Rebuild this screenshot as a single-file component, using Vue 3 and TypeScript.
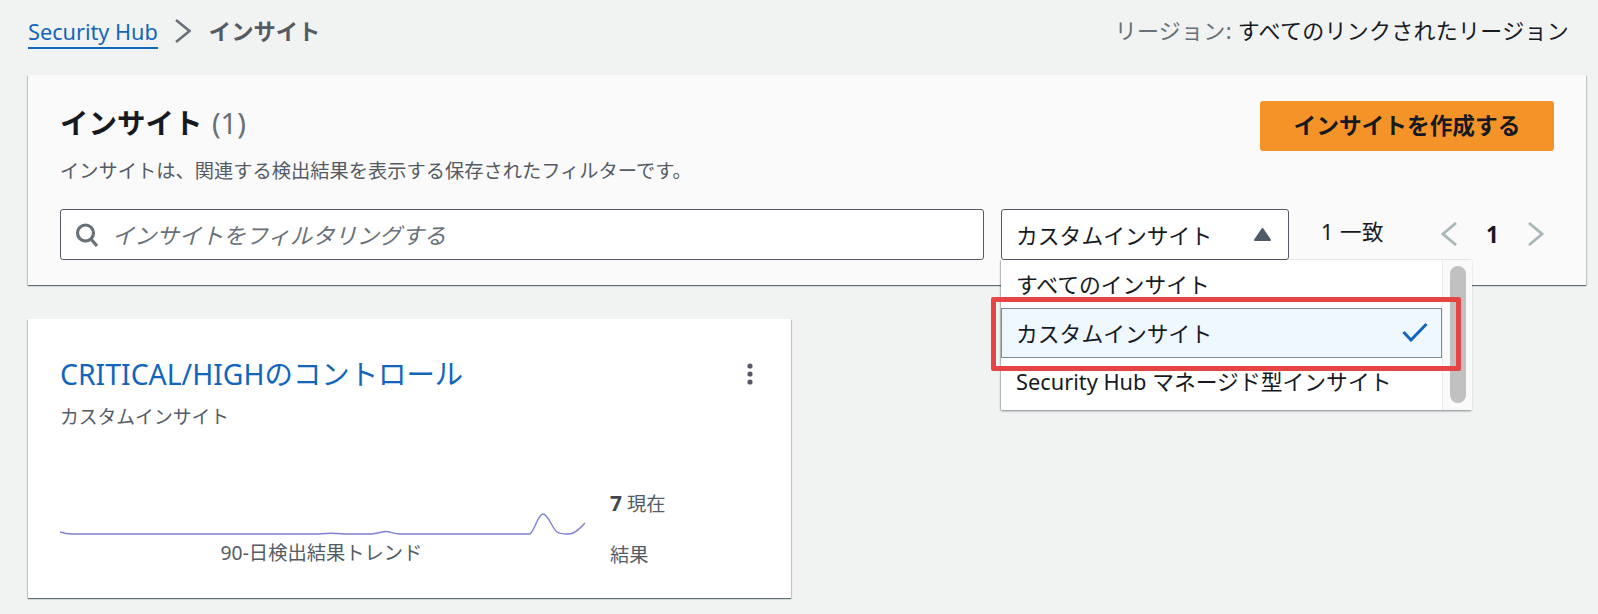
<script setup lang="ts">
const options: string[] = ['すべてのインサイト', 'カスタムインサイト', 'Security Hub マネージド型インサイト']
const selected = 'カスタムインサイト'
</script>

<template>
  <div class="page">
    <header class="topbar">
      <nav class="crumbs">
        <a class="crumb-link">Security Hub</a>
        <svg class="crumb-sep" width="16" height="24" viewBox="0 0 16 24"><path d="M1 1 L14.500 12 L1 23" /></svg>
        <span class="crumb-current">インサイト</span>
      </nav>
      <div class="region"><span class="region-label">リージョン:</span> すべてのリンクされたリージョン</div>
    </header>

    <section class="panel">
      <div class="panel-head">
        <div>
          <h1 class="title">インサイト <span class="count">(1)</span></h1>
          <p class="desc">インサイトは、関連する検出結果を表示する保存されたフィルターです。</p>
        </div>
        <button class="primary">インサイトを作成する</button>
      </div>
      <div class="filters">
        <div class="search">
          <svg width="24" height="24" viewBox="0 0 24 24" class="search-icon"><circle cx="10.5" cy="10" r="8" /><path d="M16 16 L22 23" /></svg>
          <span class="placeholder">インサイトをフィルタリングする</span>
        </div>
        <div class="select-wrap">
          <div class="select">
            <span>{{ selected }}</span>
            <svg width="17" height="13" viewBox="0 0 17 13"><path d="M8.500 1 L16 12 L1 12 Z" fill="#4f5b66" stroke="#4f5b66" stroke-width="2" stroke-linejoin="round" /></svg>
          </div>
          <div class="menu">
            <ul class="menu-list">
              <li v-for="o in options" :key="o" class="option" :class="{ active: o === selected }">
                <span>{{ o }}</span>
                <svg v-if="o === selected" width="26" height="20" viewBox="0 0 26 20"><path d="M1.5 10 L9 18 L24.5 2" /></svg>
              </li>
            </ul>
            <div class="track"><div class="thumb"></div></div>
            <div class="callout"></div>
          </div>
        </div>
        <div class="matches">1 一致</div>
        <div class="pager">
          <svg width="16" height="24" viewBox="0 0 16 24"><path d="M15 1 L2 12 L15 23" /></svg>
          <span class="page-no">1</span>
          <svg width="16" height="24" viewBox="0 0 16 24"><path d="M1 1 L14 12 L1 23" /></svg>
        </div>
      </div>
    </section>

    <article class="card">
      <div class="card-head">
        <a class="card-title">CRITICAL/HIGHのコントロール</a>
        <svg class="kebab" width="6" height="22" viewBox="0 0 6 22"><circle cx="3" cy="3" r="2.6" /><circle cx="3" cy="11" r="2.6" /><circle cx="3" cy="19" r="2.6" /></svg>
      </div>
      <div class="card-sub">カスタムインサイト</div>
      <div class="card-stats">
        <div class="trend">
          <svg width="526" height="28" viewBox="0 0 526 28">
            <path d="M0 19 C3 20 6 21 12 21 L258 21 C264 21 267 20.200 271 20.200 C275 20.200 279 21 285 21 L312 21 C317 20.500 322 18.500 326 18.500 C330 18.500 334 21 340 21 L470 21 C475 17 478 1 483 1 C488 1 492 15 497 19 C501 21.500 505 21 509 21 C515 21 520 15 525 10" />
          </svg>
          <div class="trend-label">90-日検出結果トレンド</div>
        </div>
        <div class="totals">
          <div><b>7</b> 現在</div>
          <div>結果</div>
        </div>
      </div>
    </article>
  </div>
</template>

<style>
html, body { margin: 0; background: #f1f3f3; }
</style>

<style scoped>
.page {
  width: 1598px;
  height: 614px;
  box-sizing: border-box;
  padding: 0 12px 0 28px;
  overflow: hidden;
  background: #f1f3f3;
  font-family: "Noto Sans", "Noto Sans CJK JP", sans-serif;
  color: #16191f;
}
.topbar {
  height: 75px;
  display: flex;
  justify-content: space-between;
  padding: 17px 0 0;
  box-sizing: border-box;
  font-size: 22px;
  line-height: 30px;
}
.crumbs { display: flex; align-items: flex-start; }
.crumb-link {
  color: #1166bb;
  border-bottom: 2px solid #1166bb;
  height: 30px;
  font-size: 21.700px;
}
.crumb-sep { margin: 2px 18px 0 17px; }
.crumb-sep path { fill: none; stroke: #687078; stroke-width: 2.600; }
.crumb-current { color: #545b64; font-weight: 700; font-size: 22.300px; }
.region { padding-right: 17px; margin-top: -2px; letter-spacing: 0.27px; }
.region-label { color: #687078; }

.panel {
  height: 210px;
  box-sizing: border-box;
  padding: 26px 32px 0 32px;
  background: #fafafa;
  box-shadow: 0 1px 1px rgba(0, 28, 36, 0.45), 1px 1px 1px rgba(0, 28, 36, 0.15), -1px 1px 1px rgba(0, 28, 36, 0.15);
}
.panel-head { display: flex; justify-content: space-between; align-items: flex-start; height: 108px; }
.title { margin: 0; font-size: 28.500px; line-height: 44px; font-weight: 700; }
.count { color: #687078; font-weight: 400; font-size: 29px; margin-left: 2px; }
.desc { margin: 13px 0 0; font-size: 19.250px; line-height: 26px; color: #545b64; }
.primary {
  width: 294px;
  height: 50px;
  border: 0;
  border-radius: 3px;
  background: #f49428;
  color: #16191f;
  font: 700 22.700px/30px "Noto Sans", "Noto Sans CJK JP", sans-serif;
  padding: 0;
}
.filters { display: flex; align-items: flex-start; }
.search {
  width: 924px;
  height: 51px;
  box-sizing: border-box;
  display: flex;
  align-items: center;
  border: 1px solid #545b64;
  border-radius: 3px;
  background: #fff;
  margin-right: 17px;
  padding-left: 14px;
}
.search-icon { flex: none; }
.search-icon circle, .search-icon path { fill: none; stroke: #687078; stroke-width: 3.200; }
.placeholder { margin-left: 13px; font-size: 22.300px; font-style: italic; color: #687078; }
.select-wrap { position: relative; width: 288px; height: 51px; }
.select {
  height: 51px;
  box-sizing: border-box;
  display: flex;
  align-items: center;
  justify-content: space-between;
  padding: 0 17px 0 14px;
  border: 1px solid #545b64;
  border-radius: 3px;
  background: #fff;
  font-size: 21.800px;
}
.menu {
  position: absolute;
  z-index: 3;
  left: 0;
  top: 51px;
  width: 470px;
  height: 150px;
  display: flex;
  background: #fff;
  box-shadow: 0 1px 2px rgba(0, 28, 36, 0.45), 1px 0 1px rgba(0, 28, 36, 0.15), -1px 0 1px rgba(0, 28, 36, 0.15);
  font-size: 21.800px;
}
.menu-list { list-style: none; margin: 0; padding: 0; width: 441px; flex: none; }
.option {
  height: 45px;
  box-sizing: border-box;
  display: flex;
  align-items: center;
  justify-content: space-between;
  padding: 0 14px 0 15px;
  white-space: nowrap;
}
.option:first-child { height: 47px; }
.option.active { height: 50px; margin-top: 1px; padding-bottom: 2px; background: #f0f8ff; border: 1px solid #7d8998; padding-left: 14px; padding-right: 13px; }
.option.active svg path { fill: none; stroke: #1166bb; stroke-width: 3; }
.track { flex: 1; background: #fafafa; border-left: 1px solid #ebebeb; padding: 6px 6px 0 7px; }
.thumb { width: 16px; height: 137px; border-radius: 8px; background: #c1c1c1; }
.callout {
  position: absolute;
  left: -10px;
  top: 37px;
  width: 470px;
  height: 74px;
  box-sizing: border-box;
  border: 5px solid #e54545;
  border-radius: 2px;
}
.matches { margin-left: 32px; font-size: 21.500px; line-height: 46px; letter-spacing: 0.5px; }
.pager { display: flex; align-items: center; height: 50px; margin-left: 57px; }
.pager svg { flex: none; }
.pager path { fill: none; stroke: #aab7b8; stroke-width: 2.800; }
.page-no { width: 71px; text-align: center; font-weight: 700; font-size: 22.400px; color: #16191f; }

.card {
  position: relative;
  width: 763px;
  height: 279px;
  box-sizing: border-box;
  margin-top: 34px;
  padding: 35px 38px 0 32px;
  background: #fff;
  box-shadow: 0 1px 1px rgba(0, 28, 36, 0.45), 1px 1px 1px rgba(0, 28, 36, 0.15), -1px 1px 1px rgba(0, 28, 36, 0.15);
}
.card-head { display: flex; justify-content: space-between; align-items: center; height: 40px; }
.card-title { color: #1166bb; font-size: 28.400px; line-height: 40px; }
.kebab circle { fill: #545b64; }
.card-sub { margin-top: 10px; font-size: 18.800px; line-height: 26px; color: #545b64; }
.card-stats { display: flex; margin-top: 60px; }
.trend { width: 526px; padding-top: 23px; }
.trend svg { display: block; }
.trend svg path { fill: none; stroke: #7f7fd5; stroke-width: 1.400; }
.trend-label { margin-top: -1px; text-align: center; font-size: 19.300px; line-height: 26px; color: #545b64; padding-right: 3px; }
.totals { margin-left: 24px; font-size: 19.300px; line-height: 26px; color: #545b64; display: flex; flex-direction: column; gap: 25px; }
.totals b { color: #414750; font-size: 21px; }
</style>
